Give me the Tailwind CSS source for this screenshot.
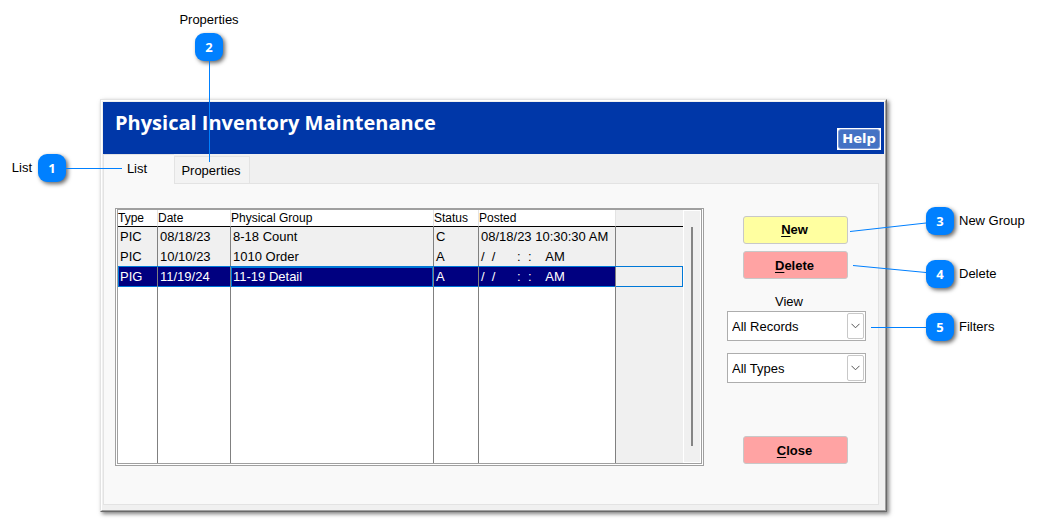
<!DOCTYPE html>
<html lang="en">
<head>
<meta charset="utf-8">
<title>Physical Inventory Maintenance</title>
<script src="https://cdn.jsdelivr.net/npm/@tailwindcss/browser@4"></script>
</head>
<body class="bg-white font-['Liberation_Sans',Arial,sans-serif] text-[13px] leading-4 text-black">
<div class="relative mt-[99px] mb-2 ml-[100px] mr-[152px]">

  <!-- Application window -->
  <main class="border border-t-[#e3e3e3] border-l-[#e3e3e3] border-r-[#696969] border-b-[#696969] shadow-[2px_2px_4px_rgba(0,0,0,0.5)]">
    <div class="border border-t-white border-l-white border-r-[#a0a0a0] border-b-[#a0a0a0] bg-[#f0f0f0] p-px">
      <header class="flex h-13 items-start justify-between bg-[#0037a8] pl-3 pr-[3px]">
        <h1 class="mt-[9px] font-['Open_Sans',sans-serif] text-[20px] leading-6 font-bold text-white">Physical Inventory Maintenance</h1>
        <button type="button" class="mt-[26px] h-[22px] w-11 bg-white p-px"><span class="flex h-full items-center justify-center rounded-[3px] border border-[#7d9ad6] bg-[#4472c4] font-['DejaVu_Sans',sans-serif] text-[13px] leading-4 font-bold text-white">Help</span></button>
      </header>

      <div class="mr-[5px] mb-1">
        <div role="tablist" class="flex h-[29px] items-end">
          <button type="button" role="tab" aria-selected="true" class="relative z-10 -mb-px h-[30px] w-[71px] border-t border-l border-[#e3e3e3] bg-[#f9f9f9] pb-[2px] pr-1">List</button>
          <button type="button" role="tab" aria-selected="false" class="h-[27px] w-[76px] border border-b-0 border-[#e3e3e3] bg-[#f3f3f3] pt-[2px] pr-[2px]">Properties</button>
        </div>

        <section role="tabpanel" class="flex gap-[23px] border border-[#e3e3e3] bg-[#f9f9f9] pt-6 pr-3 pb-[38px] pl-[11px]">
          <div class="flex-1 border border-[#a0a0a0] bg-white px-px pb-px">
            <div class="flex border border-[#a0a0a0] bg-[#f0f0f0]">
              <table class="h-[253px] flex-1 table-fixed border-separate border-spacing-0 text-left whitespace-pre">
                <colgroup><col class="w-10"><col class="w-[73px]"><col><col class="w-[45px]"><col class="w-[137px]"><col class="w-[67px]"></colgroup>
                <thead class="text-[12px] leading-4">
                  <tr class="h-[17px] bg-white">
                    <th class="border-r border-b border-r-[#e3e3e3] border-b-black p-0 font-normal">Type</th>
                    <th class="border-r border-b border-r-[#e3e3e3] border-b-black p-0 font-normal">Date</th>
                    <th class="border-r border-b border-r-[#e3e3e3] border-b-black p-0 font-normal">Physical Group</th>
                    <th class="border-r border-b border-r-[#e3e3e3] border-b-black p-0 font-normal">Status</th>
                    <th class="border-r border-b border-r-[#e3e3e3] border-b-black p-0 font-normal">Posted</th>
                    <td class="border-b border-black bg-[#f0f0f0] p-0"></td>
                  </tr>
                </thead>
                <tbody>
                  <tr class="h-5">
                    <td class="border-r border-[#808080] p-0 pl-[2px]">PIC</td>
                    <td class="border-r border-[#808080] p-0 pl-[2px]">08/18/23</td>
                    <td class="border-r border-[#808080] p-0 pl-[2px]">8-18 Count</td>
                    <td class="border-r border-[#808080] p-0 pl-[2px]">C</td>
                    <td class="border-r border-[#808080] p-0 pl-[2px]">08/18/23 10:30:30 AM</td>
                    <td class="p-0"></td>
                  </tr>
                  <tr class="h-5">
                    <td class="border-r border-[#808080] p-0 pl-[2px]">PIC</td>
                    <td class="border-r border-[#808080] p-0 pl-[2px]">10/10/23</td>
                    <td class="border-r border-[#808080] p-0 pl-[2px]">1010 Order</td>
                    <td class="border-r border-[#808080] p-0 pl-[2px]">A</td>
                    <td class="border-r border-[#808080] p-0 pl-[2px]">/  /      :  :    AM</td>
                    <td class="p-0"></td>
                  </tr>
                  <tr class="h-5 text-white" aria-selected="true">
                    <td class="border-r border-[#808080] bg-[#000080] p-0 pl-[2px] shadow-[0_-1px_#0078d7,inset_1px_-1px_#0078d7]">PIG</td>
                    <td class="border-r border-[#808080] bg-[#000080] p-0 pl-[2px] shadow-[0_-1px_#0078d7,inset_0_-1px_#0078d7]">11/19/24</td>
                    <td class="border-r border-[#808080] bg-[#000080] p-0 pl-[2px] shadow-[0_-1px_#0078d7,inset_0_0_0_1px_#0078d7]">11-19 Detail</td>
                    <td class="border-r border-[#808080] bg-[#000080] p-0 pl-[2px] shadow-[0_-1px_#0078d7,inset_0_-1px_#0078d7]">A</td>
                    <td class="border-r border-[#808080] bg-[#000080] p-0 pl-[2px] shadow-[0_-1px_#0078d7,inset_0_-1px_#0078d7]">/  /      :  :    AM</td>
                    <td class="p-0 shadow-[0_-1px_#0078d7,inset_-1px_-1px_#0078d7]"></td>
                  </tr>
                  <tr>
                    <td class="border-r border-[#808080] bg-white p-0"></td>
                    <td class="border-r border-[#808080] bg-white p-0"></td>
                    <td class="border-r border-[#808080] bg-white p-0"></td>
                    <td class="border-r border-[#808080] bg-white p-0"></td>
                    <td class="border-r border-[#808080] bg-white p-0"></td>
                    <td class="p-0"></td>
                  </tr>
                </tbody>
              </table>
              <!-- Scroll bar -->
              <div class="flex w-[18px] justify-center border border-white pt-4 pb-4"><div class="w-[2px] bg-[#858585]"></div></div>
            </div>
          </div>

          <div class="flex w-[139px] flex-col pt-2">
            <button type="button" class="mr-[18px] ml-4 h-7 rounded-[3px] border border-[#c8c8c8] bg-[#ffffa0] pr-[2px] text-[13px] font-bold"><u class="underline-offset-2">N</u>ew</button>
            <button type="button" class="mr-[18px] ml-4 mt-[7px] h-7 rounded-[3px] border border-[#c8c8c8] bg-[#ffa3a3] pt-[2px] pr-[2px] text-[13px] font-bold"><u class="underline-offset-2">D</u>elete</button>
            <label for="records" class="mt-[15px] mr-[15px] text-center">View</label>
            <div class="relative mt-px h-[30px]">
              <select id="records" class="h-full w-full appearance-none border border-[#adadad] bg-white pt-[2px] pl-1"><option>All Records</option><option>All Types</option></select>
              <span class="pointer-events-none absolute inset-y-[2px] right-[2px] flex w-[17px] items-center justify-center rounded-[2px] border border-[#c8c8c8] bg-white"><svg width="9" height="6" viewBox="0 0 9 6" fill="none" stroke="#555" stroke-width="1"><path d="M.5 .8 4.500 4.800 8.500 .8"/></svg></span>
            </div>
            <div class="relative mt-3 h-[30px]">
              <select aria-label="Type" class="h-full w-full appearance-none border border-[#adadad] bg-white pt-[2px] pl-1"><option>All Types</option></select>
              <span class="pointer-events-none absolute inset-y-[2px] right-[2px] flex w-[17px] items-center justify-center rounded-[2px] border border-[#c8c8c8] bg-white"><svg width="9" height="6" viewBox="0 0 9 6" fill="none" stroke="#555" stroke-width="1"><path d="M.5 .8 4.500 4.800 8.500 .8"/></svg></span>
            </div>
            <button type="button" class="mr-[18px] ml-4 mt-auto mb-[2px] h-7 rounded-[3px] border border-[#c8c8c8] bg-[#ffa3a3] pt-[2px] pr-[2px] text-[13px] font-bold"><u class="underline-offset-2">C</u>lose</button>
          </div>
        </section>
      </div>
    </div>
  </main>

  <!-- Callouts -->
  <div class="absolute top-[55px] right-full -mr-[22px] z-20 flex items-center">
    <span class="mr-[6px]">List</span>
    <span class="flex size-7 items-center justify-center rounded-[9px] bg-[#0080ff] font-['Open_Sans',sans-serif] text-[13px] font-bold text-white shadow-[2px_2px_4px_rgba(0,0,0,0.6)]">1</span>
    <span class="h-px w-14 bg-[#0080ff]"></span>
  </div>
  <div class="absolute -top-[87px] left-[79px] z-20 flex w-[60px] flex-col items-center">
    <span>Properties</span>
    <span class="mt-[5px] flex size-7 items-center justify-center rounded-[9px] bg-[#0080ff] font-['Open_Sans',sans-serif] text-[13px] font-bold text-white shadow-[2px_2px_4px_rgba(0,0,0,0.6)]">2</span>
    <span class="h-[101px] w-px bg-[#0080ff]"></span>
  </div>
  <svg class="absolute top-[108px] left-full -ml-10 z-20" width="80" height="140" viewBox="0 0 80 140" fill="none" stroke="#0080ff" stroke-width="1"><path d="M3 24.500 79 16M6 58.500 79 65.500M24 120.500H79"/></svg>
  <div class="absolute top-[108px] left-full z-20 ml-[39px] flex flex-col gap-[25px] whitespace-nowrap">
    <div class="flex items-center gap-[5px]"><span class="flex size-7 items-center justify-center rounded-[9px] bg-[#0080ff] font-['Open_Sans',sans-serif] text-[13px] font-bold text-white shadow-[2px_2px_4px_rgba(0,0,0,0.6)]">3</span>New Group</div>
    <div class="flex items-center gap-[5px]"><span class="flex size-7 items-center justify-center rounded-[9px] bg-[#0080ff] font-['Open_Sans',sans-serif] text-[13px] font-bold text-white shadow-[2px_2px_4px_rgba(0,0,0,0.6)]">4</span>Delete</div>
    <div class="flex items-center gap-[5px]"><span class="flex size-7 items-center justify-center rounded-[9px] bg-[#0080ff] font-['Open_Sans',sans-serif] text-[13px] font-bold text-white shadow-[2px_2px_4px_rgba(0,0,0,0.6)]">5</span>Filters</div>
  </div>
</div>
</body>
</html>
